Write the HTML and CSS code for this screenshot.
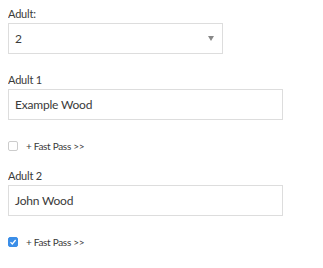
FILE: index.html
```html
<!DOCTYPE html>
<html lang="en">

<head>
  <meta charset="UTF-8">
  <title>Passengers</title>
  <link rel="stylesheet" href="styles.css">
</head>

<body>
  <div class="form">
    <div class="field">
      <label class="label">Adult:</label>
      <div class="select">
        <span>2</span>
        <span class="arrow"></span>
      </div>
    </div>

    <div class="field">
      <label class="label">Adult 1</label>
      <div class="input">Example Wood</div>
    </div>
    <div class="check">
      <span class="box"></span>
      <span>+ Fast Pass &gt;&gt;</span>
    </div>

    <div class="field">
      <label class="label">Adult 2</label>
      <div class="input">John Wood</div>
    </div>
    <div class="check">
      <span class="box checked">
        <svg width="8" height="8" viewBox="0 0 8 8"><path d="M1.5 4.2 L3.3 6 L6.6 2" fill="none" stroke="#fff" stroke-width="1.2"/></svg>
      </span>
      <span>+ Fast Pass &gt;&gt;</span>
    </div>
  </div>
</body>

</html>
```

FILE: styles.css
```css
body {
  margin: 8px;
  font-family: Lato, "Open Sans", sans-serif;
  color: #3a3a3a;
  background: #fff;
}

.form {
  display: flex;
  flex-direction: column;
}

.field {
  display: flex;
  flex-direction: column;
}

.label {
  font-size: 11px;
  line-height: 12px;
  height: 12px;
  margin-bottom: 3px;
  letter-spacing: -0.2px;
}

.select {
  box-sizing: border-box;
  width: 215px;
  height: 31px;
  border: 1px solid #ddd;
  display: flex;
  align-items: center;
  justify-content: space-between;
  padding: 0 8px 0 6px;
  font-size: 12px;
  margin-bottom: 20px;
}

.arrow {
  width: 0;
  height: 0;
  border-left: 3px solid transparent;
  border-right: 3px solid transparent;
  border-top: 5px solid #888;
}

.input {
  box-sizing: border-box;
  width: 275px;
  height: 31px;
  border: 1px solid #ddd;
  display: flex;
  align-items: center;
  padding: 0 6px;
  font-size: 12px;
  letter-spacing: -0.2px;
}

.check {
  display: flex;
  align-items: center;
  gap: 8px;
  font-size: 10px;
  height: 10px;
  margin: 21px 0 19px;
  letter-spacing: -0.3px;
}

.box {
  box-sizing: border-box;
  width: 10px;
  height: 10px;
  border: 1px solid #ccc;
  border-radius: 2px;
  display: flex;
  align-items: center;
  justify-content: center;
}

.box.checked {
  background: #3b8ee8;
  border-color: #3b8ee8;
}
```
